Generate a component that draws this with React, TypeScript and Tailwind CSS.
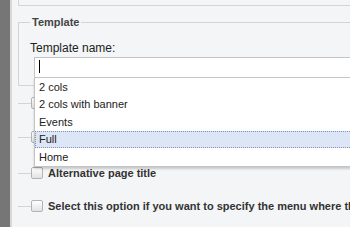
import React from "react";

const templates = ["2 cols", "2 cols with banner", "Events", "Full", "Home"];

function Checkbox() {
  return (
    <span className="block h-[12px] w-[12px] shrink-0 rounded-[2px] border border-[#b3b3b3] bg-gradient-to-b from-white to-[#e2e2e2]" />
  );
}

function OptionRow({ label, className }: { label?: string; className: string }) {
  return (
    <div className={`ml-[6px] flex h-[12px] items-center ${className}`}>
      <span className="h-px w-[13px] shrink-0 bg-[#d4d4d4]" />
      <Checkbox />
      {label && (
        <span className="ml-[5px] whitespace-nowrap text-[11px] font-bold leading-none text-[#333]">
          {label}
        </span>
      )}
    </div>
  );
}

export default function App() {
  return (
    <div
      className="relative flex h-[227px] w-[350px] overflow-hidden bg-[#f3f5f7]"
      style={{ fontFamily: '"Liberation Sans", Arial, sans-serif' }}
    >
      <div className="w-[10px] shrink-0 bg-[#767676]" />
      <div className="w-[2px] shrink-0 bg-[#d9d9d9]" />

      <div className="min-w-0 flex-1">
        {/* previous panel */}
        <div className="ml-[6px] h-[6px] border-b border-l border-[#d4d4d4]" />

        <fieldset className="ml-[6px] mt-[10px] border-b border-l border-t border-[#d4d4d4] pb-[7px]">
          <legend className="ml-[11px] px-[2px] text-[11px] font-bold leading-[13px] text-[#444]">
            Template
          </legend>
          <div className="pl-[11px] pt-[12px] text-[12px] leading-[14px] text-[#222]">
            Template name:
          </div>
          <div className="ml-[15px] mt-[2px] flex h-[21px] w-[340px] items-center border border-[#c4c4c4] bg-white pb-[2px] pl-[4px]">
            <span className="h-[13px] w-px bg-black" />
          </div>
        </fieldset>

        {/* rows under the open list: only their checkbox edge shows */}
        <OptionRow className="mt-[11px]" />
        <OptionRow className="mt-[22px]" />
        <OptionRow label="Alternative page title" className="mt-[24px]" />
        <OptionRow
          label="Select this option if you want to specify the menu where this page appears"
          className="mt-[21px]"
        />
      </div>

      {/* open template dropdown */}
      <ul className="absolute left-[34px] top-[77px] w-[330px] border-b border-l border-t border-[#c4c4c4] bg-white shadow-[0_2px_2px_rgba(0,0,0,0.18)]">
        {templates.map((name) => (
          <li
            key={name}
            className={`flex h-[17.5px] items-center pl-[3px] text-[11px] text-[#222] ${
              name === "Full"
                ? "border border-dotted border-[#7d8fb3] bg-[#dde6f6]"
                : "border border-transparent"
            }`}
          >
            {name}
          </li>
        ))}
      </ul>
    </div>
  );
}
